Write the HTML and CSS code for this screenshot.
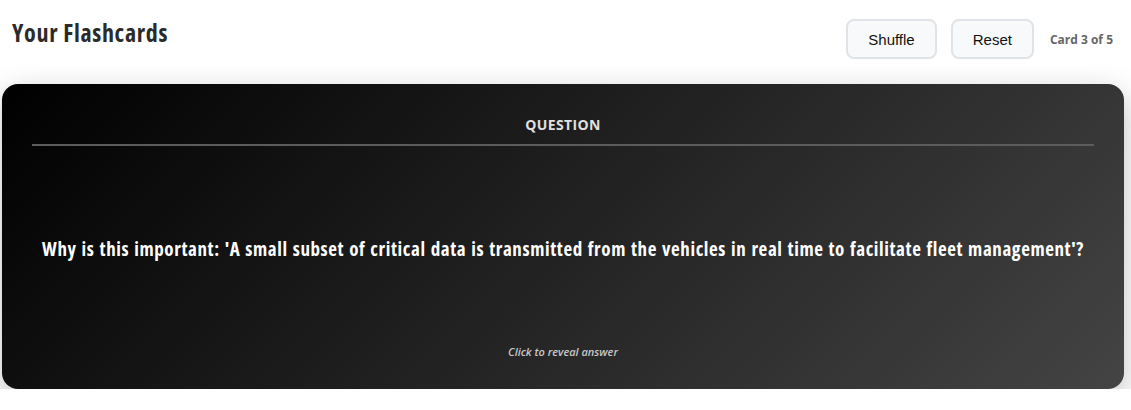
FILE: index.html
```html
<!DOCTYPE html>
<html>
<head>
<meta charset="utf-8">
<link rel="stylesheet" href="styles.css">
</head>
<body>
<div class="page">
  <header class="header">
    <h2 class="title">Your Flashcards</h2>
    <div class="controls">
      <button class="btn">Shuffle</button>
      <button class="btn">Reset</button>
      <span class="counter">Card 3 of 5</span>
    </div>
  </header>
  <div class="card">
    <div class="label">QUESTION</div>
    <div class="content">Why is this important: 'A small subset of critical data is transmitted from the vehicles in real time to facilitate fleet management'?</div>
    <div class="hint">Click to reveal answer</div>
  </div>
</div>
</body>
</html>
```
FILE: styles.css
```css
html, body {
  margin: 0;
  padding: 0;
  background: #ffffff;
}
body {
  font-family: "Open Sans", "Noto Sans", sans-serif;
}
.page {
  padding: 0 7px 0 2px;
}
.header {
  display: flex;
  align-items: flex-start;
  justify-content: space-between;
  height: 84px;
  padding-left: 10px;
}
.title {
  margin: 18px 0 0 0;
  font-size: 24px;
  font-weight: 700;
  color: #2b2b2b;
  line-height: 30px;
  font-stretch: 75%;
  letter-spacing: 0.7px;
}
.controls {
  display: flex;
  align-items: center;
  gap: 14px;
  margin-top: 19px;
}
.btn {
  font-family: "Liberation Sans", Arial, sans-serif;
  font-size: 15px;
  color: #111;
  background: #f8f9fa;
  border: 2px solid #e0e3e7;
  border-radius: 8px;
  height: 40px;
  padding: 0 20px;
  cursor: pointer;
}
.counter {
  font-size: 12px;
  font-weight: 700;
  color: #666;
  margin-left: 2px;
  margin-right: 11px;
}
.card {
  background: linear-gradient(135deg, #000000 0%, #444444 100%);
  border-radius: 16px;
  box-shadow: 0 10px 30px rgba(0,0,0,0.25);
  height: 305px;
  padding: 0 30px;
  display: flex;
  flex-direction: column;
  color: #fff;
}
.label {
  text-align: center;
  font-size: 14px;
  font-weight: 700;
  letter-spacing: 0.4px;
  color: #e0e0e0;
  padding: 32px 0 10px;
  border-bottom: 2px solid #5c5c5c;
  line-height: 18px;
}
.content {
  flex: 1;
  display: flex;
  align-items: center;
  justify-content: center;
  text-align: center;
  font-size: 19px;
  font-weight: 700;
  padding-top: 8px;
  font-stretch: 75%;
  letter-spacing: 0.6px;
  word-spacing: 1px;
  white-space: nowrap;
}
.hint {
  text-align: center;
  font-size: 11px;
  font-weight: 600;
  font-style: italic;
  color: #c8c8c8;
  padding-bottom: 30px;
}
```
